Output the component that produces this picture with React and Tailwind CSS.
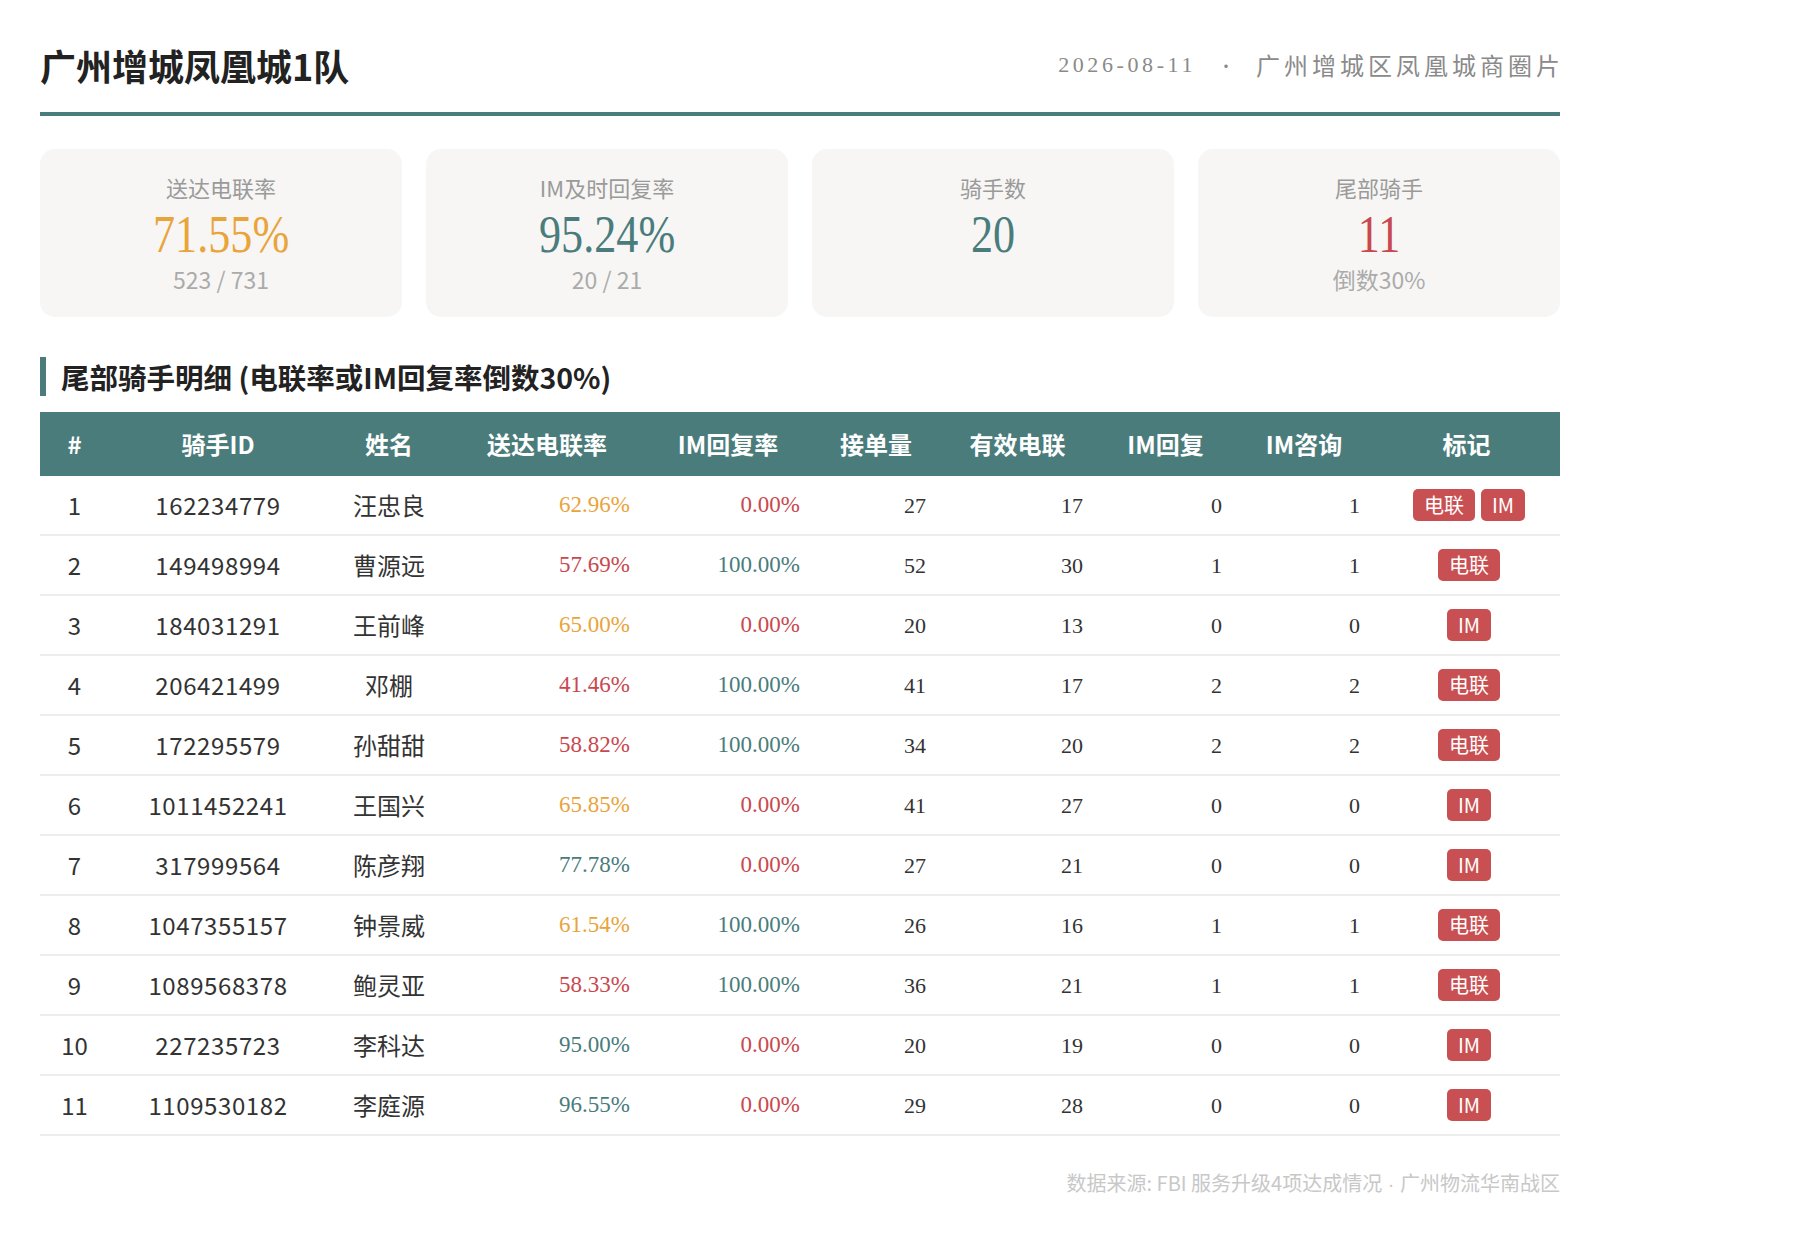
import React from "react";

const rows = [
  [1, "162234779", "汪忠良", 62.96, 0, 27, 17, 0, 1, ["电联", "IM"]],
  [2, "149498994", "曹源远", 57.69, 100, 52, 30, 1, 1, ["电联"]],
  [3, "184031291", "王前峰", 65.0, 0, 20, 13, 0, 0, ["IM"]],
  [4, "206421499", "邓棚", 41.46, 100, 41, 17, 2, 2, ["电联"]],
  [5, "172295579", "孙甜甜", 58.82, 100, 34, 20, 2, 2, ["电联"]],
  [6, "1011452241", "王国兴", 65.85, 0, 41, 27, 0, 0, ["IM"]],
  [7, "317999564", "陈彦翔", 77.78, 0, 27, 21, 0, 0, ["IM"]],
  [8, "1047355157", "钟景威", 61.54, 100, 26, 16, 1, 1, ["电联"]],
  [9, "1089568378", "鲍灵亚", 58.33, 100, 36, 21, 1, 1, ["电联"]],
  [10, "227235723", "李科达", 95.0, 0, 20, 19, 0, 0, ["IM"]],
  [11, "1109530182", "李庭源", 96.55, 0, 29, 28, 0, 0, ["IM"]],
];

const rateColor = (v) =>
  v < 60 ? "text-[#c9484e]" : v < 70 ? "text-[#e9a43c]" : "text-[#4a7c7c]";

const GRID =
  "grid grid-cols-[69px_218px_124px_192px_170px_126px_157px_139px_138px_187px]";

const SANS = "font-['Noto_Sans_CJK_SC','Noto_Sans',sans-serif]";
const SERIF = "font-['Liberation_Serif','Noto_Sans_CJK_SC',serif]";

function Card({ label, value, color, sub }) {
  return (
    <div className="h-[168px] bg-[#f7f6f4] rounded-[15px] flex flex-col items-center pt-[24px]">
      <div className="text-[22px] leading-[28px] text-[#9a9a9a]">{label}</div>
      <div
        className={`${SERIF} mt-[10px] text-[52px] leading-[48px] scale-x-[0.85] ${color}`}
      >
        {value}
      </div>
      {sub && (
        <div className="mt-[6px] text-[23px] leading-[28px] text-[#ababab]">
          {sub}
        </div>
      )}
    </div>
  );
}

export default function App() {
  return (
    <div className={`w-[1800px] min-h-[1236px] bg-white ${SANS}`}>
      <div className="w-[1520px] ml-[40px] pt-[40px]">
        <div className="flex items-center justify-between pb-[22px] border-b-4 border-[#4a7c7c]">
          <div className="text-[36px] leading-[50px] font-bold text-[#222]">
            广州增城凤凰城1队
          </div>
          <div className="flex items-center text-[22px] leading-[50px] text-[#8a8a8a]">
            <span className={`${SERIF} tracking-[3.6px]`}>2026-08-11</span>
            <span className="mx-[22px] text-[16px]">•</span>
            <span className="text-[24px] tracking-[4px] mr-[-4px]">广州增城区凤凰城商圈片</span>
          </div>
        </div>

        <div className="grid grid-cols-4 gap-6 mt-[33px]">
          <Card label="送达电联率" value="71.55%" color="text-[#e9a43c]" sub="523 / 731" />
          <Card label="IM及时回复率" value="95.24%" color="text-[#4a7c7c]" sub="20 / 21" />
          <Card label="骑手数" value="20" color="text-[#4a7c7c]" />
          <Card label="尾部骑手" value="11" color="text-[#c9484e]" sub="倒数30%" />
        </div>

        <div className="mt-[40px] border-l-[6px] border-[#4a7c7c] pl-[15px] text-[28.5px] leading-[39px] font-bold text-[#222]">
          尾部骑手明细 (电联率或IM回复率倒数30%)
        </div>

        <div className="mt-[16px]">
          <div
            className={`${GRID} h-[64px] items-center bg-[#4a7c7c] text-white text-[24px] font-bold text-center`}
          >
            <div>#</div>
            <div>骑手ID</div>
            <div>姓名</div>
            <div>送达电联率</div>
            <div>IM回复率</div>
            <div>接单量</div>
            <div>有效电联</div>
            <div>IM回复</div>
            <div>IM咨询</div>
            <div>标记</div>
          </div>
          {rows.map((r) => (
            <div
              key={r[0]}
              className={`${GRID} h-[60px] items-center border-b-2 border-[#ededed] text-[#333]`}
            >
              <div className="text-center text-[24px]">{r[0]}</div>
              <div className="text-center text-[24px] tracking-[0.6px]">{r[1]}</div>
              <div className="text-center text-[24px]">{r[2]}</div>
              <div className={`${SERIF} text-right pr-[13px] text-[23px] ${rateColor(r[3])}`}>
                {r[3].toFixed(2)}%
              </div>
              <div className={`${SERIF} text-right pr-[13px] text-[23px] ${rateColor(r[4])}`}>
                {r[4].toFixed(2)}%
              </div>
              <div className={`${SERIF} text-right pr-[13px] text-[22px]`}>{r[5]}</div>
              <div className={`${SERIF} text-right pr-[13px] text-[22px]`}>{r[6]}</div>
              <div className={`${SERIF} text-right pr-[13px] text-[22px]`}>{r[7]}</div>
              <div className={`${SERIF} text-right pr-[13px] text-[22px]`}>{r[8]}</div>
              <div className="flex justify-center gap-[6px] pl-[5px]">
                {r[9].map((b) => (
                  <span
                    key={b}
                    className="h-[32px] px-[11px] rounded-[5px] bg-[#c85052] text-white text-[20px] leading-[32px]"
                  >
                    {b}
                  </span>
                ))}
              </div>
            </div>
          ))}
        </div>

        <div className="mt-[33px] text-right text-[20px] leading-[28px] text-[#c8c8c8]">
          数据来源: FBI 服务升级4项达成情况
          <span className="font-['Liberation_Sans',sans-serif]"> · </span>
          广州物流华南战区
        </div>
      </div>
    </div>
  );
}
